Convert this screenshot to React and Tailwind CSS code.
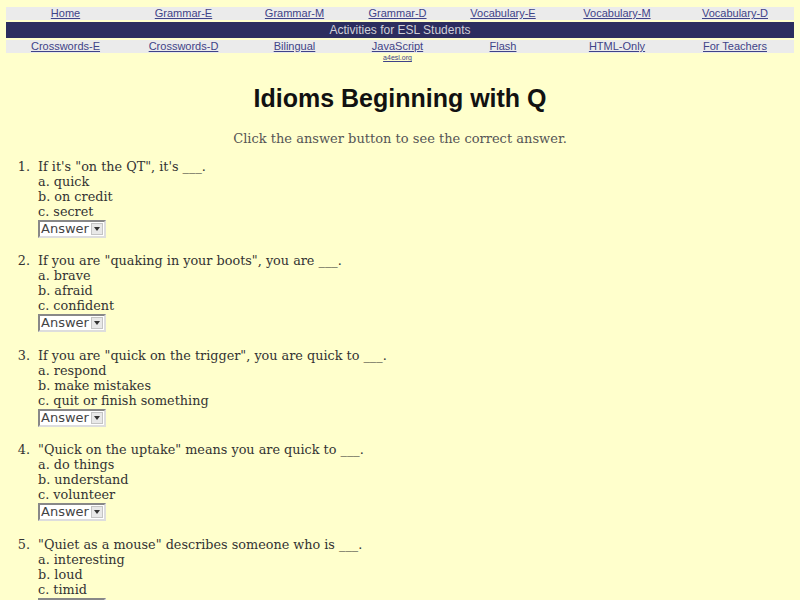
import React from 'react';

const topLinks = ['Home', 'Grammar-E', 'Grammar-M', 'Grammar-D', 'Vocabulary-E', 'Vocabulary-M', 'Vocabulary-D'];
const bottomLinks = ['Crosswords-E', 'Crosswords-D', 'Bilingual', 'JavaScript', 'Flash', 'HTML-Only', 'For Teachers'];

const questions = [
    { q: 'If it\'s "on the QT", it\'s ___.', choices: ['quick', 'on credit', 'secret'] },
    { q: 'If you are "quaking in your boots", you are ___.', choices: ['brave', 'afraid', 'confident'] },
    { q: 'If you are "quick on the trigger", you are quick to ___.', choices: ['respond', 'make mistakes', 'quit or finish something'] },
    { q: '"Quick on the uptake" means you are quick to ___.', choices: ['do things', 'understand', 'volunteer'] },
    { q: '"Quiet as a mouse" describes someone who is ___.', choices: ['interesting', 'loud', 'timid'] },
];

// columns of the nav table
const cols = 'grid grid-cols-[119px_117px_105px_101px_110px_118px_118px]';

const NavRow = ({ links }) => (
    <div className={`${cols} bg-[#ebebeb] h-[13px] items-center`}>
        {links.map((l) => (
            <a key={l} href="#" className="text-center text-[11px] leading-[13px] text-[#3f4388] underline">
                {l}
            </a>
        ))}
    </div>
);

const AnswerBox = () => (
    <div className="mt-[1px] flex items-center w-[68px] h-[18px] bg-white border-2 border-t-[#888] border-l-[#888] border-b-[#ddd] border-r-[#ddd]">
        <span className="flex-1 pl-[1px] text-[13px] leading-[14px] text-[#444] font-['DejaVu_Sans',sans-serif]">Answer</span>
        <span className="w-[12px] h-[12px] mr-[1px] bg-[#e8e8e8] border border-[#c4c4c4] flex items-center justify-center">
            <svg width="6" height="4" viewBox="0 0 6 4">
                <path d="M0 0 L6 0 L3 4 Z" fill="#333" />
            </svg>
        </span>
    </div>
);

export default function App() {
    return (
        <div className="min-h-[600px] bg-[#ffffcc] font-['Liberation_Sans',Arial,sans-serif] pt-[7px]">
            <div className="mx-[6px] flex flex-col gap-[2px]">
                <NavRow links={topLinks} />
                <div className="bg-[#2c2d5f] h-[16px] flex items-center justify-center text-[12px] text-[#d0d0d8]">
                    Activities for ESL Students
                </div>
                <NavRow links={bottomLinks} />
            </div>
            <div className={`${cols} mx-[6px]`}>
                <div className="col-start-4 text-center text-[7px] leading-[10px] text-[#3f4388] underline">a4esl.org</div>
            </div>

            <h1 className="mt-[20px] text-center text-[25px] leading-[30px] font-bold text-[#111]">
                Idioms Beginning with Q
            </h1>
            <p className="mt-[16px] text-center text-[13px] text-[#555] font-['DejaVu_Serif',serif]">
                Click the answer button to see the correct answer.
            </p>

            <ol className="mt-[10px] pl-[38px] font-['DejaVu_Serif',serif] text-[12.8px] leading-[15px] text-[#333]">
                {questions.map((item, i) => (
                    <li key={i} className="relative mb-[15.5px]">
                        <span className="absolute right-full mr-[8px]">{i + 1}.</span>
                        <div>{item.q}</div>
                        {item.choices.map((c, j) => (
                            <div key={c}>{'abc'[j]}. {c}</div>
                        ))}
                        <AnswerBox />
                    </li>
                ))}
            </ol>
        </div>
    );
}
